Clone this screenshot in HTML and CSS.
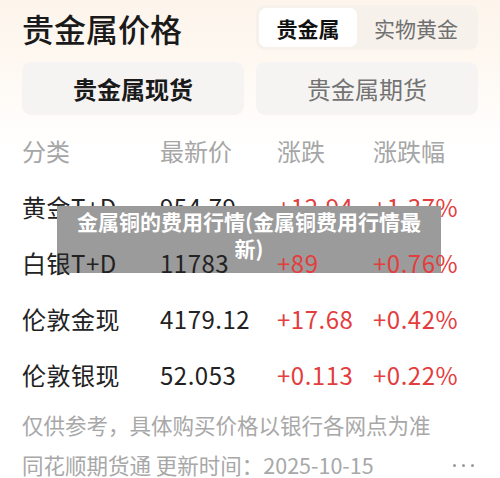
FILE: index.html
```html
<!DOCTYPE html>
<html lang="zh-CN">
<head>
  <meta charset="UTF-8">
  <meta name="viewport" content="width=device-width, initial-scale=1.0">
  <title>贵金属价格</title>
  <link rel="stylesheet" href="styles.css">
</head>
<body>
  <div class="container">
    <div class="topbar">
      <h1>贵金属价格</h1>
      <div class="segment">
        <span class="seg-item active">贵金属</span>
        <span class="seg-item">实物黄金</span>
      </div>
    </div>

    <div class="tabs">
      <div class="tab active">贵金属现货</div>
      <div class="tab">贵金属期货</div>
    </div>

    <div class="table">
      <div class="row head">
        <span>分类</span>
        <span>最新价</span>
        <span>涨跌</span>
        <span>涨跌幅</span>
      </div>
      <div class="row">
        <span>黄金T+D</span>
        <span>954.79</span>
        <span class="up">+12.94</span>
        <span class="up">+1.37%</span>
      </div>
      <div class="row raised">
        <span>白银T+D</span>
        <span>11783</span>
        <span class="up">+89</span>
        <span class="up">+0.76%</span>
      </div>
      <div class="row">
        <span>伦敦金现</span>
        <span>4179.12</span>
        <span class="up">+17.68</span>
        <span class="up">+0.42%</span>
      </div>
      <div class="row">
        <span>伦敦银现</span>
        <span>52.053</span>
        <span class="up">+0.113</span>
        <span class="up">+0.22%</span>
      </div>
    </div>

    <div class="footer">
      <p>仅供参考，具体购买价格以银行各网点为准</p>
      <div class="source">
        <p>同花顺期货通 更新时间：2025-10-15</p>
        <div class="more"><i></i><i></i><i></i></div>
      </div>
    </div>
  </div>

  <div class="caption">金属铜的费用行情(金属铜费用行情最新)</div>
</body>
</html>
```

FILE: styles.css
```css
body {
  margin: 0;
  position: relative;
  font-family: "Noto Sans CJK SC", "Noto Sans", sans-serif;
  color: #222;
  background: linear-gradient(180deg, #fdf5ec 0, #fef8f1 60px, #ffffff 150px);
  min-height: 478px;
}

.container {
  padding: 0 22px;
}

.topbar {
  display: flex;
  justify-content: space-between;
  align-items: center;
  padding-top: 5px;
  height: 45px;
}

h1 {
  margin: 0;
  font-size: 32px;
  font-weight: 500;
  line-height: 42px;
  color: #1a1a1a;
}

.segment {
  display: flex;
  padding: 3px;
  background-color: #f6f1eb;
  border-radius: 9px;
  height: 39px;
}

.seg-item {
  display: flex;
  align-items: center;
  justify-content: center;
  font-size: 21px;
  color: #707070;
  width: 118px;
}

.seg-item.active {
  width: 98px;
  background-color: #fff;
  border-radius: 7px;
  color: #111;
  font-weight: 700;
}

.tabs {
  display: flex;
  gap: 12px;
  margin-top: 12px;
}

.tab {
  flex: 1;
  height: 53px;
  display: flex;
  align-items: center;
  justify-content: center;
  background-color: #f5f4f2;
  border-radius: 9px;
  font-size: 24px;
  color: #737373;
}

.tab.active {
  color: #1a1a1a;
  font-weight: 700;
}

.table {
  margin-top: 7px;
}

.row {
  display: grid;
  grid-template-columns: 138px 117px 96px auto;
  height: 56px;
  align-items: center;
  font-size: 24px;
  letter-spacing: 0.5px;
  white-space: nowrap;
}

/* this row shows on top of the caption in the screenshot */
.row.raised {
  position: relative;
  z-index: 2;
}

.row.head {
  color: #a6a6a6;
  letter-spacing: 0;
}

.up {
  color: #e33d3d;
}

.footer {
  margin-top: 3px;
  color: #a8a8a8;
  font-size: 21.5px;
}

.footer p {
  margin: 0;
  line-height: 40px;
}

.source {
  display: flex;
  justify-content: space-between;
  align-items: center;
}

.more {
  display: flex;
  gap: 6px;
  padding-right: 4px;
}

.more i {
  width: 3px;
  height: 3px;
  border-radius: 50%;
  background-color: #9a9a9a;
}

.caption {
  position: absolute;
  z-index: 1;
  top: 206px;
  left: 57px;
  width: 360px;
  padding: 2px 12px 11px;
  background-color: #9b9b9b;
  color: #fff;
  font-size: 21px;
  font-weight: 700;
  line-height: 27px;
  text-align: center;
}
```
